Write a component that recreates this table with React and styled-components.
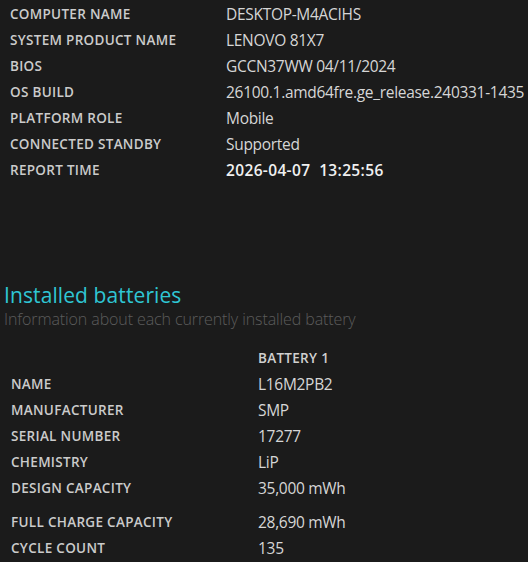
import React from "react"
import styled, { createGlobalStyle } from "styled-components"

const GlobalStyle = createGlobalStyle`
  html, body {
    margin: 0;
    padding: 0;
    background: #1b1b1b;
  }
  body {
    font-family: "Open Sans", "Noto Sans", sans-serif;
    color: #dcdcdc;
  }
`

const Page = styled.div`
  width: 528px;
  height: 562px;
  overflow: hidden;
  background: #1b1b1b;
`

const InfoTable = styled.div`
  display: grid;
  grid-template-columns: ${(props) => props.$labelWidth}px auto;
  grid-auto-rows: 26px;
  align-items: center;
  padding-left: ${(props) => props.$indent}px;
`

const Label = styled.div`
  font-size: 13.5px;
  font-weight: 600;
  letter-spacing: 0.3px;
  color: #cbcbcb;
  text-transform: uppercase;
  white-space: nowrap;
`

const Value = styled.div`
  font-size: 15.5px;
  font-weight: ${(props) => (props.$bold ? 600 : 400)};
  color: ${(props) => (props.$bold ? "#f0f0f0" : "#d6d6d6")};
  white-space: nowrap;
  letter-spacing: ${(props) => (props.$bold ? "0.35px" : "-0.3px")};
`

const Spacer = styled.div`
  height: ${(props) => props.$h}px;
`

const Section = styled.div`
  padding-left: 4px;
`

const Heading = styled.h2`
  margin: 0;
  font-size: 21px;
  font-weight: 400;
  color: #2fc6d4;
  line-height: 26px;
  letter-spacing: 0.1px;
`

const Subtitle = styled.div`
  font-size: 16px;
  font-weight: 300;
  color: #5c5c5c;
  line-height: 22px;
  letter-spacing: -0.1px;
`

const ColumnHead = styled(Label)`
  grid-column: 2;
  color: #d0d0d0;
`

const systemRows = [
  ["Computer name", "DESKTOP-M4ACIHS"],
  ["System product name", "LENOVO 81X7"],
  ["BIOS", "GCCN37WW 04/11/2024"],
  ["OS build", "26100.1.amd64fre.ge_release.240331-1435"],
  ["Platform role", "Mobile"],
  ["Connected standby", "Supported"],
]

const batteryRows = [
  ["Name", "L16M2PB2"],
  ["Manufacturer", "SMP"],
  ["Serial number", "17277"],
  ["Chemistry", "LiP"],
  ["Design capacity", "35,000 mWh"],
]

export default function App() {
  return (
    <Page>
      <GlobalStyle />
      <Spacer $h={1} />
      <InfoTable $labelWidth={216} $indent={10}>
        {systemRows.map(([label, value]) => (
          <React.Fragment key={label}>
            <Label>{label}</Label>
            <Value>{value}</Value>
          </React.Fragment>
        ))}
        <Label>Report time</Label>
        <Value $bold>2026-04-07&nbsp; 13:25:56</Value>
      </InfoTable>

      <Spacer $h={99} />
      <Section>
        <Heading>Installed batteries</Heading>
        <Subtitle>Information about each currently installed battery</Subtitle>
      </Section>

      <Spacer $h={15} />
      <InfoTable $labelWidth={247} $indent={11}>
        <ColumnHead>Battery 1</ColumnHead>
        {batteryRows.map(([label, value]) => (
          <React.Fragment key={label}>
            <Label>{label}</Label>
            <Value>{value}</Value>
          </React.Fragment>
        ))}
      </InfoTable>
      <Spacer $h={8} />
      <InfoTable $labelWidth={247} $indent={11}>
        <Label>Full charge capacity</Label>
        <Value>28,690 mWh</Value>
        <Label>Cycle count</Label>
        <Value>135</Value>
      </InfoTable>
    </Page>
  )
}
